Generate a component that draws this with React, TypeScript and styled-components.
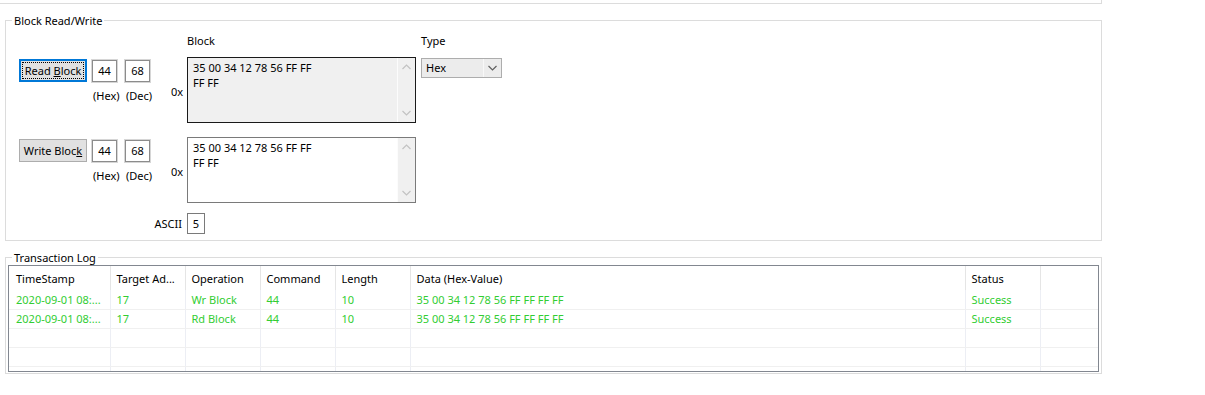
import React from 'react';
import styled, { createGlobalStyle } from 'styled-components';

const GlobalStyle = createGlobalStyle`
  html, body {
    margin: 0;
    padding: 0;
    background: #fff;
  }
  body {
    font-family: "Noto Sans", "Liberation Sans", sans-serif;
    font-size: 11px;
    color: #000;
  }
  * {
    box-sizing: border-box;
  }
`;

const logRows = [
  { time: '2020-09-01 08:...', target: '17', op: 'Wr Block', cmd: '44', len: '10', data: '35 00 34 12 78 56 FF FF FF FF', status: 'Success' },
  { time: '2020-09-01 08:...', target: '17', op: 'Rd Block', cmd: '44', len: '10', data: '35 00 34 12 78 56 FF FF FF FF', status: 'Success' },
];

const columns = [
  { title: 'TimeStamp', width: 101 },
  { title: 'Target Ad...', width: 75 },
  { title: 'Operation', width: 75 },
  { title: 'Command', width: 75 },
  { title: 'Length', width: 75 },
  { title: 'Data (Hex-Value)', width: 555 },
  { title: 'Status', width: 75 },
];

const Chevron = ({ up, color }: { up?: boolean; color: string }) => (
  <svg width="9" height="6" viewBox="0 0 9 6">
    <polyline
      points={up ? '0.5,5 4.5,1 8.5,5' : '0.5,1 4.5,5 8.5,1'}
      fill="none"
      stroke={color}
      strokeWidth="1.2"
    />
  </svg>
);

function BlockRow({ label, mnemonic, rest, focused, readOnly, gap }: {
  label: string; mnemonic: string; rest: string; focused?: boolean; readOnly?: boolean; gap: number;
}) {
  return (
    <FormRow $gap={gap}>
      <Cluster>
        <ActionButton $focused={focused}>
          {label}<u>{mnemonic}</u>{rest}
        </ActionButton>
        <NumBox>44</NumBox>
        <NumBox>68</NumBox>
        <span />
        <UnitLabel $pad={6}>(Hex)</UnitLabel>
        <UnitLabel $pad={9}>(Dec)</UnitLabel>
      </Cluster>
      <PrefixLabel>0x</PrefixLabel>
      <TextBox $readOnly={readOnly}>
        <TextContent>{'35 00 34 12 78 56 FF FF\nFF FF'}</TextContent>
        <ScrollBar>
          <Chevron up color="#c2c2c2" />
          <Chevron color="#c2c2c2" />
        </ScrollBar>
      </TextBox>
      {readOnly ? (
        <Combo>
          <ComboText>Hex</ComboText>
          <ComboArrow>
            <Chevron color="#606060" />
          </ComboArrow>
        </Combo>
      ) : <span />}
    </FormRow>
  );
}

export default function App() {
  return (
    <Page>
      <GlobalStyle />
      <TopPanel />
      <GroupBox $top={9}>
        <Legend>Block Read/Write</Legend>
        <BlockBody>
          <FormRow $gap={0}>
            <span />
            <span />
            <FieldLabel>Block</FieldLabel>
            <FieldLabel $indent={5}>Type</FieldLabel>
          </FormRow>
          <BlockRow gap={9} label="Read " mnemonic="B" rest="lock" focused readOnly />
          <BlockRow gap={14} label="Write Bloc" mnemonic="k" rest="" />
          <FormRow $gap={10}>
            <AsciiLabel>ASCII</AsciiLabel>
            <AsciiBox>5</AsciiBox>
          </FormRow>
        </BlockBody>
      </GroupBox>
      <GroupBox $top={9}>
        <Legend>Transaction Log</Legend>
        <ListView>
          <Table>
            <colgroup>
              {columns.map((c) => <col key={c.title} style={{ width: c.width }} />)}
              <col />
            </colgroup>
            <thead>
              <tr>
                {columns.map((c, i) => <HeadCell key={c.title} $first={i === 0}>{c.title}</HeadCell>)}
                <HeadCell $last />
              </tr>
            </thead>
            <tbody>
              {logRows.map((r, i) => (
                <tr key={i}>
                  <Cell $first>{r.time}</Cell>
                  <Cell>{r.target}</Cell>
                  <Cell>{r.op}</Cell>
                  <Cell>{r.cmd}</Cell>
                  <Cell>{r.len}</Cell>
                  <Cell>{r.data}</Cell>
                  <Cell>{r.status}</Cell>
                  <Cell $last />
                </tr>
              ))}
              {[0, 1, 2].map((i) => (
                <tr key={`e${i}`}>
                  {columns.map((c) => <Cell key={c.title} />)}
                  <Cell $last />
                </tr>
              ))}
            </tbody>
          </Table>
        </ListView>
      </GroupBox>
    </Page>
  );
}

const Page = styled.div`
  width: 1205px;
  height: 395px;
  background: #fff;
  overflow: hidden;
`;

const TopPanel = styled.div`
  width: 1102px;
  height: 4px;
  border-right: 1px solid #dcdcdc;
  border-bottom: 1px solid #dcdcdc;
`;

const GroupBox = styled.fieldset<{ $top: number }>`
  margin: ${(p) => p.$top}px 0 0 5px;
  width: 1097px;
  min-width: 0;
  padding: 0;
  border: 1px solid #dcdcdc;
`;

const Legend = styled.legend`
  margin-left: 6px;
  padding: 0 2px;
  font-size: 11px;
  line-height: 15px;
  color: #000;
`;

const BlockBody = styled.div`
  display: flex;
  flex-direction: column;
  padding: 5px 0 6px 13px;
`;

const FormRow = styled.div<{ $gap: number }>`
  display: grid;
  grid-template-columns: 152px 16px 229px auto;
  margin-top: ${(p) => p.$gap}px;
`;

const FieldLabel = styled.div<{ $indent?: number }>`
  line-height: 15px;
  padding-left: ${(p) => p.$indent || 0}px;
`;

const Cluster = styled.div`
  display: grid;
  grid-template-columns: 68px 30px 33px;
  grid-template-rows: 23px auto;
  align-self: start;
  margin-top: 2px;
`;

const ActionButton = styled.button<{ $focused?: boolean }>`
  width: 68px;
  height: 23px;
  padding: 0;
  font: inherit;
  color: #000;
  background: #e1e1e1;
  border: 1px solid ${(p) => (p.$focused ? '#0078d7' : '#adadad')};
  box-shadow: ${(p) => (p.$focused ? 'inset 0 0 0 1px #0078d7' : 'none')};
  outline: ${(p) => (p.$focused ? '1px dotted #000' : 'none')};
  outline-offset: -4px;
  white-space: nowrap;
`;

const NumBox = styled.div`
  justify-self: end;
  width: 25px;
  height: 22px;
  margin-top: 1px;
  border: 1px solid #8c8c8c;
  box-shadow: 0 0 0 1px #d6d6d6;
  text-align: center;
  line-height: 20px;
`;

const UnitLabel = styled.div<{ $pad: number }>`
  padding-left: ${(p) => p.$pad}px;
  margin-top: 6px;
  line-height: 15px;
  white-space: nowrap;
`;

const PrefixLabel = styled.div`
  align-self: center;
  padding-top: 2px;
  line-height: 15px;
`;

const TextBox = styled.div<{ $readOnly?: boolean }>`
  display: flex;
  height: 66px;
  border: 1px solid ${(p) => (p.$readOnly ? '#1a1a1a' : '#7a7a7a')};
  background: ${(p) => (p.$readOnly ? '#f0f0f0' : '#fff')};
`;

const TextContent = styled.div`
  flex: 1;
  padding: 2px 0 0 5px;
  line-height: 15px;
  white-space: pre;
`;

const ScrollBar = styled.div`
  width: 18px;
  display: flex;
  flex-direction: column;
  justify-content: space-between;
  align-items: center;
  padding: 6px 0 6px;
  background: #f0f0f0;
  border-left: 1px solid #fcfcfc;
`;

const Combo = styled.div`
  display: flex;
  align-self: start;
  width: 81px;
  height: 20px;
  margin: 1px 0 0 5px;
  border: 1px solid #adadad;
  background: #ececec;
`;

const ComboText = styled.div`
  flex: 1;
  padding-left: 4px;
  line-height: 18px;
`;

const ComboArrow = styled.div`
  width: 18px;
  display: flex;
  align-items: center;
  justify-content: center;
  border-left: 1px solid #f8f8f8;
`;

const AsciiLabel = styled.div`
  grid-column: 1 / 3;
  justify-self: end;
  align-self: center;
  padding-right: 5px;
  line-height: 15px;
`;

const AsciiBox = styled.div`
  width: 18px;
  height: 21px;
  border: 1px solid #7a7a7a;
  text-align: center;
  line-height: 19px;
`;

const ListView = styled.div`
  height: 107px;
  margin: 0 2px 1px;
  border: 1px solid #828790;
  overflow: hidden;
`;

const Table = styled.table`
  width: 100%;
  border-collapse: collapse;
  table-layout: fixed;
`;

const HeadCell = styled.th<{ $last?: boolean; $first?: boolean }>`
  height: 24px;
  padding: 0 0 0 ${(p) => (p.$first ? 7 : 6)}px;
  text-align: left;
  font-weight: normal;
  color: #000;
  white-space: nowrap;
  overflow: hidden;
  border-right: ${(p) => (p.$last ? 'none' : '1px solid #e5e5e5')};
`;

const Cell = styled.td<{ $last?: boolean; $first?: boolean }>`
  height: 19px;
  padding: 0 0 0 ${(p) => (p.$first ? 7 : 6)}px;
  color: #32cd32;
  white-space: nowrap;
  overflow: hidden;
  border-bottom: 1px solid #f0f0f0;
  border-right: ${(p) => (p.$last ? 'none' : '1px solid #eceef4')};
`;
